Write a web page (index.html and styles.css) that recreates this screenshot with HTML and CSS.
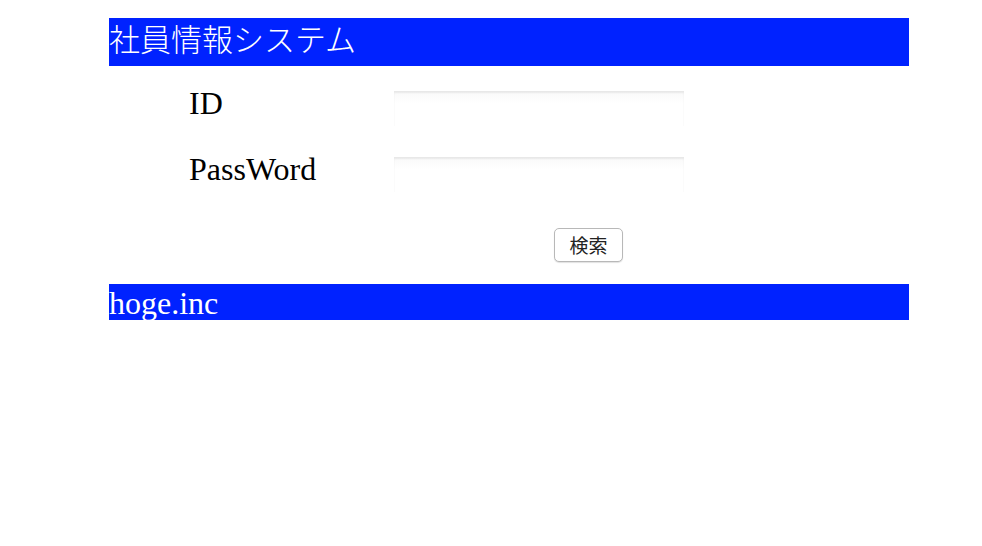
FILE: index.html
```html
<!DOCTYPE html>
<html lang="ja">
<head>
<meta charset="utf-8">
<title>社員情報システム</title>
<link rel="stylesheet" href="styles.css">
</head>
<body>
<div class="page">
  <header class="bar bar-head">社員情報システム</header>
  <form class="login">
    <div class="row">
      <label class="label">ID</label>
      <input class="field" type="text">
    </div>
    <div class="row">
      <label class="label">PassWord</label>
      <input class="field" type="password">
    </div>
    <div class="actions">
      <button class="btn" type="button">検索</button>
    </div>
  </form>
  <footer class="bar bar-foot">hoge.inc</footer>
</div>
</body>
</html>
```

FILE: styles.css
```css
html, body {
  margin: 0;
  padding: 0;
  background: #ffffff;
}
body {
  font-family: "Liberation Serif", "Noto Sans CJK JP", serif;
  color: #000;
}
.page {
  width: 800px;
  margin: 18px 0 0 109px;
}
.bar {
  background: #0022ff;
  color: #ffffff;
  font-size: 32px;
  white-space: nowrap;
}
.bar-head {
  height: 48px;
  line-height: 46px;
  font-size: 31px;
  font-family: "Liberation Serif", "Noto Sans CJK JP", serif;
  font-weight: 300;
}
.bar-foot {
  height: 36px;
  line-height: 38px;
}
.login {
  padding: 25px 0 0 80px;
}
.row {
  display: grid;
  grid-template-columns: 205px 290px;
  height: 66px;
}
.label {
  font-size: 32px;
  line-height: 36px;
  margin-top: -6px;
}
.field {
  width: 290px;
  height: 35px;
  box-sizing: border-box;
  border: none;
  margin: 0;
  padding: 0;
  background: linear-gradient(to bottom, rgba(0, 0, 0, 0.025) 0, #fff 12px);
  box-shadow: inset 0 2px 2px rgba(0, 0, 0, 0.07);
  outline: none;
}
.actions {
  display: flex;
  padding-left: 365px;
  padding-top: 5px;
  height: 45px;
  box-sizing: content-box;
  margin-bottom: 11px;
}
.btn {
  width: 69px;
  height: 34px;
  font-family: "Noto Sans CJK JP", sans-serif;
  font-size: 19px;
  color: #222;
  background: #fff;
  border: 1px solid #b8b8b8;
  border-radius: 5px;
  box-shadow: 0 1px 1px rgba(0, 0, 0, 0.12);
  padding: 0;
  line-height: 30px;
}
```
